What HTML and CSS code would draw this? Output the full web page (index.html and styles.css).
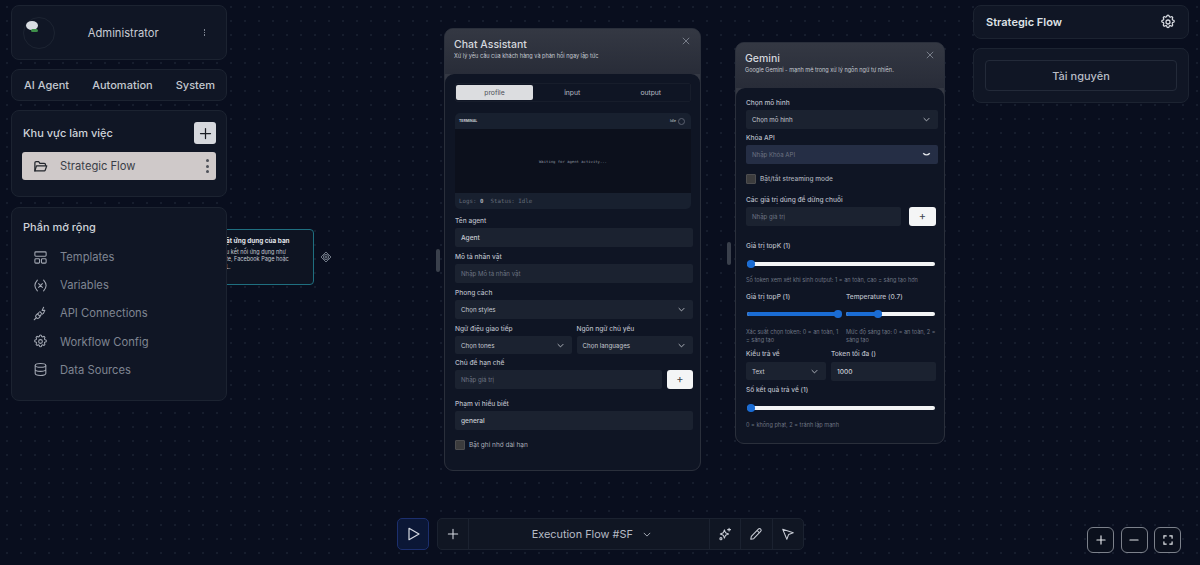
FILE: index.html
```html
<!DOCTYPE html>
<html lang="vi">
<head>
<meta charset="utf-8">
<title>Strategic Flow</title>
<link rel="stylesheet" href="styles.css">
</head>
<body>
<main class="canvas">
  <div class="node-mini">
    <div class="mini-title">ật ứng dụng của bạn</div>
    <div class="mini-text">u kết nối ứng dụng như<br>te, Facebook Page hoặc<br>L.</div>
  </div>
  <svg class="mini-handle" viewBox="0 0 12 12" fill="none" stroke="#6f7785" stroke-width="1"><path d="M6 1 11 6 6 11 1 6Z"/><circle cx="6" cy="6" r="2.6"/><path d="M6 4.500v3M4.500 6h3"/></svg>

  <aside class="col-left">
    <section class="panel user">
      <div class="avatar"><span class="blob"></span><span class="blob-g"></span></div>
      <span class="user-name">Administrator</span>
      <span class="dots-sm"><i></i><i></i><i></i></span>
    </section>
    <nav class="panel tabs-main">
      <span>AI Agent</span><span>Automation</span><span>System</span>
    </nav>
    <section class="panel workspace">
      <div class="ws-head"><h2>Khu vực làm việc</h2>
        <button class="ws-add"><svg viewBox="0 0 24 24" fill="none" stroke="#1a1d24" stroke-width="2" stroke-linecap="round"><path d="M12 4v16M4 12h16"/></svg></button>
      </div>
      <div class="ws-item">
        <svg viewBox="0 0 24 24" fill="none" stroke="#23262d" stroke-width="2" stroke-linecap="round" stroke-linejoin="round"><path d="M3 19V6a2 2 0 0 1 2-2h4l2 3h7a2 2 0 0 1 2 2v1"/><path d="M3 19l2.500-8H22l-2.500 7a1.500 1.500 0 0 1-1.500 1H3Z"/></svg>
        <span>Strategic Flow</span>
        <span class="dots-lg"><i></i><i></i><i></i></span>
      </div>
    </section>
    <section class="panel ext">
      <h2>Phần mở rộng</h2>
      <ul>
        <li><svg viewBox="0 0 24 24" fill="none" stroke="currentColor" stroke-width="1.700" stroke-linejoin="round"><rect x="3" y="3" width="18" height="7" rx="1.500"/><rect x="3" y="14" width="7.500" height="7" rx="1.500"/><rect x="13.500" y="14" width="7.500" height="7" rx="1.500"/></svg>Templates</li>
        <li><svg viewBox="0 0 24 24" fill="none" stroke="currentColor" stroke-width="1.700" stroke-linecap="round"><path d="M7 3.500C4 7 3 9.500 3 12s1 5 4 8.500M17 3.500c3 3.500 4 6 4 8.500s-1 5-4 8.500M9 9l6 6M15 9l-6 6"/></svg>Variables</li>
        <li><svg viewBox="0 0 24 24" fill="none" stroke="currentColor" stroke-width="1.700" stroke-linecap="round" stroke-linejoin="round"><path d="M2 22l3.500-3.500M7 12.500l4.500 4.500-2 2a3 3 0 0 1-4 0l-.500-.500a3 3 0 0 1 0-4ZM9.500 10.500 7.500 12.500M13 14l-2 2M11 9l4 4M17 2l-2.500 5H19l-2.500 5"/></svg>API Connections</li>
        <li><svg viewBox="0 0 24 24" fill="none" stroke="currentColor" stroke-width="1.700" stroke-linecap="round" stroke-linejoin="round"><path d="M10.300 3.300a1.700 1.700 0 0 1 3.400 0 1.700 1.700 0 0 0 2.500 1.100 1.700 1.700 0 0 1 2.400 2.400 1.700 1.700 0 0 0 1.100 2.500 1.700 1.700 0 0 1 0 3.400 1.700 1.700 0 0 0-1.100 2.500 1.700 1.700 0 0 1-2.400 2.400 1.700 1.700 0 0 0-2.500 1.100 1.700 1.700 0 0 1-3.400 0 1.700 1.700 0 0 0-2.500-1.100 1.700 1.700 0 0 1-2.400-2.400 1.700 1.700 0 0 0-1.100-2.500 1.700 1.700 0 0 1 0-3.400 1.700 1.700 0 0 0 1.100-2.500 1.700 1.700 0 0 1 2.400-2.400 1.700 1.700 0 0 0 2.500-1.100Z"/><circle cx="12" cy="12" r="3"/></svg>Workflow Config</li>
        <li><svg viewBox="0 0 24 24" fill="none" stroke="currentColor" stroke-width="1.700"><ellipse cx="12" cy="5.500" rx="8.500" ry="3"/><path d="M3.500 5.500v13c0 1.700 3.800 3 8.500 3s8.500-1.300 8.500-3v-13M3.500 12c0 1.700 3.800 3 8.500 3s8.500-1.300 8.500-3"/></svg>Data Sources</li>
      </ul>
    </section>
  </aside>

  <div class="grip grip-a"></div>
  <article class="node chat">
    <header class="node-head">
      <h3>Chat Assistant</h3>
      <p>Xử lý yêu cầu của khách hàng và phản hồi ngay lập tức</p>
      <svg class="close" viewBox="0 0 10 10" fill="none" stroke="#8a909c" stroke-width="1"><path d="M1 1l8 8M9 1 1 9"/></svg>
    </header>
    <div class="node-body">
      <div class="seg"><span class="on">profile</span><span>input</span><span>output</span></div>
      <div class="term">
        <div class="term-head"><b>TERMINAL</b><span>Idle</span><i class="term-dot"></i></div>
        <div class="term-main">Waiting for agent activity...</div>
        <div class="term-foot">Logs: <b>0</b>&nbsp; Status: Idle</div>
      </div>
      <label class="lab mt4">Tên agent</label>
      <div class="field val">Agent</div>
      <label class="lab">Mô tả nhân vật</label>
      <div class="field ph">Nhập Mô tả nhân vật</div>
      <label class="lab">Phong cách</label>
      <div class="field sel">Chọn styles<svg class="chev" viewBox="0 0 10 6"><path d="M1 1l4 4 4-4"/></svg></div>
      <div class="two">
        <div><label class="lab">Ngữ điệu giao tiếp</label><div class="field sel">Chọn tones<svg class="chev" viewBox="0 0 10 6"><path d="M1 1l4 4 4-4"/></svg></div></div>
        <div><label class="lab">Ngôn ngữ chủ yếu</label><div class="field sel">Chọn languages<svg class="chev" viewBox="0 0 10 6"><path d="M1 1l4 4 4-4"/></svg></div></div>
      </div>
      <label class="lab">Chủ đề hạn chế</label>
      <div class="add-row"><div class="field ph">Nhập giá trị</div><button class="plus">+</button></div>
      <label class="lab mt8">Phạm vi hiểu biết</label>
      <div class="field val">general</div>
      <div class="check"><i></i>Bật ghi nhớ dài hạn</div>
    </div>
  </article>

  <div class="grip grip-b"></div>
  <article class="node gem">
    <header class="node-head">
      <h3>Gemini</h3>
      <p>Google Gemini - mạnh mẽ trong xử lý ngôn ngữ tự nhiên.</p>
      <svg class="close" viewBox="0 0 10 10" fill="none" stroke="#8a909c" stroke-width="1"><path d="M1 1l8 8M9 1 1 9"/></svg>
    </header>
    <div class="node-body">
      <label class="lab">Chọn mô hình</label>
      <div class="field sel">Chọn mô hình<svg class="chev" viewBox="0 0 10 6"><path d="M1 1l4 4 4-4"/></svg></div>
      <label class="lab">Khóa API</label>
      <div class="field ph blue">Nhập Khóa API<svg class="chev chev-b" viewBox="0 0 10 6"><path d="M1 1.500q4 4 8 0"/></svg></div>
      <div class="check c2"><i></i>Bật/tắt streaming mode</div>
      <label class="lab mt10">Các giá trị dùng để dừng chuỗi</label>
      <div class="add-row wide"><div class="field ph">Nhập giá trị</div><button class="plus">+</button></div>
      <label class="lab mt16">Giá trị topK (1)</label>
      <div class="slider"><b class="fill" style="width:0%"></b><i style="left:0%"></i></div>
      <p class="hint">Số token xem xét khi sinh output: 1 = an toàn, cao = sáng tạo hơn</p>
      <div class="two t2">
        <div><label class="lab">Giá trị topP (1)</label>
          <div class="slider"><b class="fill" style="width:100%"></b><i style="left:calc(100% - 7px)"></i></div>
          <p class="hint">Xác suất chọn token: 0 = an toàn, 1 = sáng tạo</p></div>
        <div><label class="lab">Temperature (0.7)</label>
          <div class="slider"><b class="fill" style="width:35%"></b><i style="left:32%"></i></div>
          <p class="hint">Mức độ sáng tạo: 0 = an toàn, 2 = sáng tạo</p></div>
      </div>
      <div class="two t3">
        <div><label class="lab">Kiểu trả về</label><div class="field sel">Text<svg class="chev" viewBox="0 0 10 6"><path d="M1 1l4 4 4-4"/></svg></div></div>
        <div><label class="lab">Token tối đa ()</label><div class="field val">1000</div></div>
      </div>
      <label class="lab">Số kết quả trả về (1)</label>
      <div class="slider"><b class="fill" style="width:0%"></b><i style="left:0%"></i></div>
      <p class="hint h-last">0 = không phạt, 2 = tránh lặp mạnh</p>
    </div>
  </article>

  <aside class="col-right">
    <section class="panel flow-title"><span>Strategic Flow</span>
      <svg viewBox="0 0 24 24" fill="none" stroke="#d7dae0" stroke-width="1.900" stroke-linecap="round" stroke-linejoin="round"><path d="M10.300 3.300a1.700 1.700 0 0 1 3.400 0 1.700 1.700 0 0 0 2.500 1.100 1.700 1.700 0 0 1 2.400 2.400 1.700 1.700 0 0 0 1.100 2.500 1.700 1.700 0 0 1 0 3.400 1.700 1.700 0 0 0-1.100 2.500 1.700 1.700 0 0 1-2.400 2.400 1.700 1.700 0 0 0-2.500 1.100 1.700 1.700 0 0 1-3.400 0 1.700 1.700 0 0 0-2.500-1.100 1.700 1.700 0 0 1-2.400-2.400 1.700 1.700 0 0 0-1.100-2.500 1.700 1.700 0 0 1 0-3.400 1.700 1.700 0 0 0 1.100-2.500 1.700 1.700 0 0 1 2.400-2.400 1.700 1.700 0 0 0 2.500-1.100Z"/><circle cx="12" cy="12" r="3"/></svg>
    </section>
    <section class="panel res"><button>Tài nguyên</button></section>
  </aside>

  <footer class="dock">
    <button class="play"><svg viewBox="0 0 24 24" fill="none" stroke="#d5d9e2" stroke-width="1.800" stroke-linejoin="round"><path d="M6 3.500 21 12 6 20.500Z"/></svg></button>
    <div class="bar">
      <span class="cell c-plus"><svg viewBox="0 0 24 24" fill="none" stroke="#d5d9e2" stroke-width="1.800" stroke-linecap="round"><path d="M12 4v16M4 12h16"/></svg></span>
      <span class="cell c-name">Execution Flow #SF<svg viewBox="0 0 10 6" fill="none" stroke="#b4b9c3" stroke-width="1.100"><path d="M1 1l4 4 4-4"/></svg></span>
      <span class="cell"><svg viewBox="0 0 24 24" fill="none" stroke="#c9cdd6" stroke-width="1.800" stroke-linejoin="round" stroke-linecap="round"><path d="M11 7l2 5 5 2-5 2-2 5-2-5-5-2 5-2Z" transform="translate(0 -2)"/><path d="M19 2v5M16.500 4.500h5"/><circle cx="5" cy="20" r="1.800"/></svg></span>
      <span class="cell"><svg viewBox="0 0 24 24" fill="none" stroke="#c9cdd6" stroke-width="1.800" stroke-linejoin="round"><path d="M16 3.500a2.800 2.800 0 0 1 4 4L8 20l-5 1 1-5Z"/><path d="M14 6l4 4"/></svg></span>
      <span class="cell"><svg viewBox="0 0 24 24" fill="none" stroke="#c9cdd6" stroke-width="1.800" stroke-linejoin="round"><path d="M3 4l18 6-8 3-3 8Z"/></svg></span>
    </div>
  </footer>

  <div class="zoomers">
    <button><svg viewBox="0 0 24 24" fill="none" stroke="#e4e6ea" stroke-width="2" stroke-linecap="round"><path d="M12 5v14M5 12h14"/></svg></button>
    <button><svg viewBox="0 0 24 24" fill="none" stroke="#e4e6ea" stroke-width="2" stroke-linecap="round"><path d="M5 12h14"/></svg></button>
    <button><svg viewBox="0 0 24 24" fill="none" stroke="#e4e6ea" stroke-width="2" stroke-linecap="round"><path d="M5 9V5h4M15 5h4v4M19 15v4h-4M9 19H5v-4"/></svg></button>
  </div>
</main>
</body>
</html>
```

FILE: styles.css
```css
* { box-sizing: border-box; }
html, body { margin: 0; height: 100%; overflow: hidden; }
body { font-family: Inter, "Liberation Sans", sans-serif; color: #d8dbe1; }
button { font: inherit; padding: 0; cursor: pointer; }
h2, h3, p, ul { margin: 0; padding: 0; }
li { list-style: none; }

.canvas {
  position: relative; width: 1200px; height: 565px; overflow: hidden;
  background-color: #090e1e;
  background-image: radial-gradient(circle, #171e2e 0.7px, transparent 0.9px);
  background-size: 14px 14px;
}
.panel { background: #101625; border: 1px solid #1c2331; border-radius: 8px; }

.col-left { position: absolute; left: 11px; top: 5px; width: 216px; display: flex; flex-direction: column; gap: 9px; z-index: 3; }
.user { height: 55px; display: flex; align-items: center; padding: 0 21px 0 11px; }
.avatar { position: relative; width: 32px; height: 32px; border: 1px solid #1d2432; border-radius: 50%; flex: none; }
.blob { position: absolute; left: 2px; top: 3px; width: 12px; height: 9px; background: #d9dde2; border-radius: 50%; }
.blob-g { position: absolute; left: 7px; top: 11px; width: 7px; height: 3px; background: #3e8f4a; border-radius: 2px; }
.user-name { flex: 1; text-align: center; font-size: 11.200px; color: #c8ccd4; padding-right: 12px; }
.dots-sm { display: flex; flex-direction: column; gap: 1px; }
.dots-sm i { width: 1.500px; height: 1.500px; background: #7e8592; }
.tabs-main { height: 32px; display: flex; justify-content: space-between; align-items: center; padding: 0 11px 0 12px; font-size: 11px; font-weight: 500; color: #c3c8d0; }

.workspace { height: 87px; padding: 11px 10px 0; }
.ws-head { display: flex; justify-content: space-between; align-items: center; height: 22px; }
.ws-head h2, .ext h2 { font-size: 11px; font-weight: 500; color: #cfd3da; padding-left: 1px; }
.ws-add { width: 22px; height: 22px; border: 0; border-radius: 3px; background: #d6d8dd; display: flex; align-items: center; justify-content: center; }
.ws-add svg { width: 15px; height: 15px; }
.ws-item { margin-top: 8px; height: 28px; border-radius: 3px; background: #cfc9c9; display: flex; align-items: center; padding: 0 7px 0 11px; color: #3a3e47; font-size: 11.200px; }
.ws-item svg { width: 15px; height: 15px; margin-right: 12px; }
.ws-item span:nth-child(2) { flex: 1; }
.dots-lg { display: flex; flex-direction: column; gap: 2.500px; }
.dots-lg i { width: 3px; height: 3px; border-radius: 50%; background: #4e5159; }

.ext { height: 194px; margin-top: 1px; padding: 12px 10px 0; }
.ext ul { margin-top: 9px; display: flex; flex-direction: column; }
.ext li { height: 28.200px; display: flex; align-items: center; font-size: 11.200px; color: #7f8592; padding-left: 11px; gap: 12px; }
.ext li svg { width: 15px; height: 15px; flex: none; color: #a3a8b3; }

.node-mini { position: absolute; left: 180px; top: 229px; width: 134px; height: 56px; border: 1px solid #1f6f80; border-radius: 4px; background: #0e1422; padding: 7px 0 0 45px; white-space: nowrap; z-index: 1; }
.mini-title { font-size: 6.400px; font-weight: 700; color: #e2e5ea; line-height: 9px; margin-bottom: 2.500px; }
.mini-text { font-size: 5.500px; line-height: 7.500px; color: #c6cad2; }
.mini-handle { position: absolute; left: 320px; top: 251px; width: 12px; height: 12px; }

.grip { position: absolute; width: 4px; height: 23px; border-radius: 2px; background: #3a404c; }
.grip-a { left: 436px; top: 249px; }
.grip-b { left: 727px; top: 242px; }

.node { position: absolute; border-radius: 9px; border: 1px solid #2a2f3b; background: #343843; overflow: hidden; z-index: 2; }
.chat { left: 444px; top: 28px; width: 257px; height: 443px; }
.gem { left: 735px; top: 42px; width: 210px; height: 402px; }
.node-head { position: relative; height: 45px; padding: 9px 9px 0; background: linear-gradient(#343843, #282c38); }
.node-head h3 { font-size: 10.500px; font-weight: 500; line-height: 14px; color: #d5d8de; }
.node-head p { font-size: 5.550px; line-height: 8px; color: #c6cad2; white-space: nowrap; }
.close { position: absolute; right: 10px; top: 8px; width: 8px; height: 8px; }
.node-body { height: 100%; background: #0f1524; border-top-left-radius: 9px; border-top-right-radius: 9px; padding: 9px 7px 0 10px; }

.lab { display: block; font-size: 6.600px; line-height: 10px; color: #b9bdc6; margin-bottom: 2px; font-weight: 500; }
.mt4 { margin-top: 7px; }
.mt8 { margin-top: 10px; }
.mt10 { margin-top: 11px; }
.mt16 { margin-top: 15px; }
.field { position: relative; height: 19px; border-radius: 2px; background: #1b2230; display: flex; align-items: center; padding: 0 6px; font-size: 6.200px; margin-bottom: 5px; }
.val { color: #c8ccd3; font-size: 6.600px; font-weight: 500; }
.ph { color: #6d7482; font-size: 6.050px; }
.sel { color: #c8ccd3; }
.blue { background: #252e45; }
.chev { position: absolute; right: 8px; top: 7px; width: 7px; height: 5px; fill: none; stroke: #c6cad2; stroke-width: 1.200; }
.chev-b { width: 9px; right: 7px; stroke-width: 1.500; stroke: #dfe2e7; }

.seg { display: flex; height: 19px; border: 1px solid #171d2b; border-radius: 2px; margin: 0 2px 11px 0; padding: 1px 0; }
.seg span { flex: 1; display: flex; align-items: center; justify-content: center; font-size: 6.800px; color: #b9bdc6; border-radius: 2px; }
.seg .on { flex: 0 0 77px; background: #dcdde0; color: #4c4f57; }

.term { border-radius: 5px; overflow: hidden; background: #18202f; height: 96px; margin-right: 2px; display: flex; flex-direction: column; }
.term-head { height: 16px; display: flex; align-items: center; padding: 0 6px 0 4px; font-size: 3.500px; color: #c6cad2; gap: 2px; }
.term-head b { flex: 1; font-weight: 700; }
.term-dot { width: 7px; height: 7px; border: 1px solid #5a6170; border-radius: 50%; }
.term-main { height: 64px; background: #0c101c; display: flex; align-items: center; justify-content: center; font-family: "DejaVu Sans Mono", monospace; font-size: 3.900px; color: #8a909c; }
.term-foot { flex: 1; display: flex; align-items: center; padding-left: 4px; font-family: "DejaVu Sans Mono", monospace; font-size: 5.800px; color: #646b79; white-space: pre; }
.term-foot b { color: #a9aeb8; }

.two { display: grid; grid-template-columns: 1fr 1fr; gap: 5px; }
.two .field { height: 18px; margin-bottom: 4px; }
.add-row { display: flex; gap: 5px; margin-bottom: 2px; }
.add-row .field { flex: 1; margin-bottom: 0; }
.plus { width: 26px; height: 19px; border: 0; border-radius: 3px; background: #f4f5f6; color: #41454d; font-size: 11px; line-height: 17px; }
.check { display: flex; align-items: center; gap: 4px; font-size: 6.500px; color: #a9aeb8; margin-top: 10px; }
.check i { width: 10px; height: 10px; border: 1px solid #4d4d4f; border-radius: 1px; background: #3c3c3d; }

.gem .node-body { padding: 10px 6px 0 10px; }
.gem > .node-body > .field { margin-bottom: 4px; }
.gem .two.t2 { grid-template-columns: 96px 92px; gap: 4px; }
.gem .two.t3 { grid-template-columns: 80px 105px; gap: 5px; }
.c2 { margin-top: 10px; font-weight: 500; }
.wide { gap: 8px; margin-bottom: 4px; }
.wide .plus { margin-right: 2px; width: 27px; }
.slider { position: relative; height: 4px; margin: 11px 3px 0 1px; border-radius: 2px; background: #f3f4f5; }
.slider .fill { position: absolute; left: 0; top: 0; height: 100%; background: #1a6cd4; border-radius: 2px; }
.slider i { position: absolute; top: -1.750px; width: 7.500px; height: 7.500px; border-radius: 50%; background: #1a6cd4; }
.hint { margin-top: 10px; font-size: 5.600px; line-height: 8px; color: #6d7482; }
.t2 { margin-top: 8px; }
.t2 .slider { margin-top: 10px; margin-right: 1px; }
.t2 > div + div .slider { margin-left: 0; margin-right: 3px; }
.t2 .hint { margin-top: 12px; }
.t3 { margin-top: 5px; }
.t3 .lab { margin-bottom: 3px; }
.t3 .val { height: 19px; }
.h-last { margin-top: 11px; }

.col-right { position: absolute; left: 973px; top: 5px; width: 216px; display: flex; flex-direction: column; gap: 9px; z-index: 3; }
.flow-title { height: 34px; display: flex; align-items: center; justify-content: space-between; padding: 0 12px; font-size: 11px; font-weight: 600; color: #dfe2e7; }
.flow-title svg { width: 16px; height: 16px; }
.res { height: 55px; padding: 11px; }
.res button { width: 100%; height: 31px; background: transparent; border: 1px solid #232a39; border-radius: 4px; color: #b9bdc6; font-size: 11px; font-weight: 500; }

.dock { position: absolute; left: 397px; top: 518px; display: flex; gap: 8px; z-index: 3; }
.play { width: 32px; height: 32px; border: 1px solid #1c2f6e; border-radius: 5px; background: #0b1736; display: flex; align-items: center; justify-content: center; }
.play svg { width: 16px; height: 16px; }
.bar { width: 367px; height: 32px; display: flex; background: #101623; border: 1px solid #1b2230; border-radius: 5px; }
.cell { width: 31.500px; display: flex; align-items: center; justify-content: center; border-left: 1px solid #1b2230; }
.cell svg { width: 14px; height: 14px; }
.c-plus { border-left: 0; width: 30px; }
.c-name { flex: 1; gap: 10px; padding-left: 5px; font-size: 10.900px; color: #b6bbc5; }
.c-name svg { width: 8px; height: 5px; }

.zoomers { position: absolute; left: 1087px; top: 527px; display: flex; gap: 6.500px; }
.zoomers button { width: 27px; height: 26px; background: #0b101d; border: 1px solid #7c818b; border-radius: 6px; display: flex; align-items: center; justify-content: center; }
.zoomers svg { width: 14px; height: 14px; }
```
